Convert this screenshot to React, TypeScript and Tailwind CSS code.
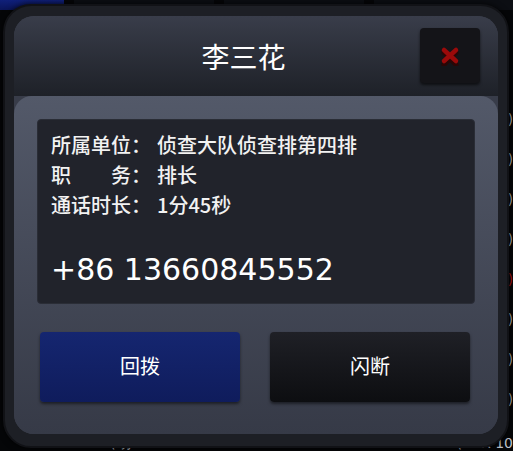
import React from "react";

const cjk = { fontFamily: '"Noto Sans CJK SC", "Noto Sans", sans-serif' };

function Row({ label, value }: { label: React.ReactNode; value: string }) {
  return (
    <div className="flex h-[30px] items-center">
      <div className="flex w-[106px] items-center">{label}</div>
      <div>{value}</div>
    </div>
  );
}

export default function App() {
  const rightMarks = [125, 165, 205, 245, 285, 325, 365, 405];
  return (
    <div className="relative h-[451px] w-[513px] overflow-hidden bg-[#050608]" style={cjk}>
      {/* background tabs */}
      <div className="flex h-[10px] gap-[10px]">
        <div className="w-[64px] bg-gradient-to-b from-[#10207a] to-[#0b155a]" />
        <div className="w-[140px] bg-[#0c0e13]" />
        <div className="w-[140px] bg-[#0c0e13]" />
        <div className="flex-1 bg-[#0c0e13]" />
      </div>
      {/* background right column glyphs */}
      <div className="absolute right-0 top-[110px] flex flex-col gap-[22px] text-[13px] leading-[18px] text-[#c8c8c8]">
        {rightMarks.map((y, i) => (
          <span key={y} className={i === 4 ? "text-[#d01818]" : ""}>)</span>
        ))}
      </div>
      {/* background bottom text */}
      <div className="absolute bottom-0 left-[110px] flex w-[403px] justify-between text-[14px] leading-[16px] text-[#bfc3cc]" style={{ fontFamily: '"DejaVu Sans", sans-serif' }}>
        <span>( 务</span>
        <span>188 13660845552</span>
        <span>(XXX-10</span>
      </div>

      {/* dialog */}
      <div className="absolute left-[3px] top-[4px] h-[444px] w-[506px] rounded-[28px] border-2 border-[#111216] bg-[#1d1f25] px-[9px] pb-[12px] pt-[10px] shadow-[0_0_6px_rgba(0,0,0,0.8)]">
        <div className="flex h-full flex-col overflow-hidden rounded-[20px] bg-[#383c49]">
          {/* header */}
          <div className="relative flex h-[80px] shrink-0 items-center justify-center bg-gradient-to-b from-[#393d4a] to-[#1e2128] pr-[25px]">
            <div className="text-[28px] leading-none text-white">李三花</div>
            <div className="absolute left-[406px] top-[12px] flex h-[55px] w-[60px] items-center justify-center rounded-[4px] bg-[#141418] shadow-[0_2px_3px_rgba(0,0,0,0.6)]">
              <svg width="22" height="20" viewBox="0 0 22 20">
                <path d="M5 5 L17 17 M17 5 L5 17" stroke="#2a0606" strokeWidth="5" strokeLinecap="round" transform="translate(0,1.5)" />
                <path d="M5 4 L17 15 M17 4 L5 15" stroke="#9a0a0a" strokeWidth="4.5" strokeLinecap="round" />
              </svg>
            </div>
          </div>
          {/* body */}
          <div className="flex flex-1 flex-col rounded-t-[18px] bg-gradient-to-b from-[#535969] to-[#363a47] px-[23px] pt-[23px]">
            <div className="h-[185px] rounded-[4px] border border-[#2a2d36] bg-[#21232b] px-[13px] pt-[10px] text-[20px] font-medium text-[#f2f2f2]">
              <Row label={<span>所属单位：</span>} value="侦查大队侦查排第四排" />
              <Row
                label={
                  <>
                    <span className="flex w-[80px] justify-between">
                      <span>职</span>
                      <span>务</span>
                    </span>
                    <span>：</span>
                  </>
                }
                value="排长"
              />
              <Row label={<span>通话时长：</span>} value="1分45秒" />
              <div
                className="mt-[32px] text-[30px] leading-[36px] text-white"
                style={{ fontFamily: '"DejaVu Sans", sans-serif' }}
              >
                +86 13660845552
              </div>
            </div>
            <div className="mt-[28px] flex gap-[30px] px-[3px]">
              <button className="flex h-[70px] w-[200px] items-center justify-center rounded-[4px] bg-gradient-to-b from-[#152670] to-[#0f1c5c] pb-[3px] text-[20px] text-white shadow-[0_2px_3px_rgba(0,0,0,0.5)]">
                回拨
              </button>
              <button className="flex h-[70px] w-[200px] items-center justify-center rounded-[4px] bg-gradient-to-b from-[#1f2026] to-[#0d0e11] pb-[3px] text-[20px] text-white shadow-[0_2px_3px_rgba(0,0,0,0.5)]">
                闪断
              </button>
            </div>
          </div>
        </div>
      </div>
    </div>
  );
}
